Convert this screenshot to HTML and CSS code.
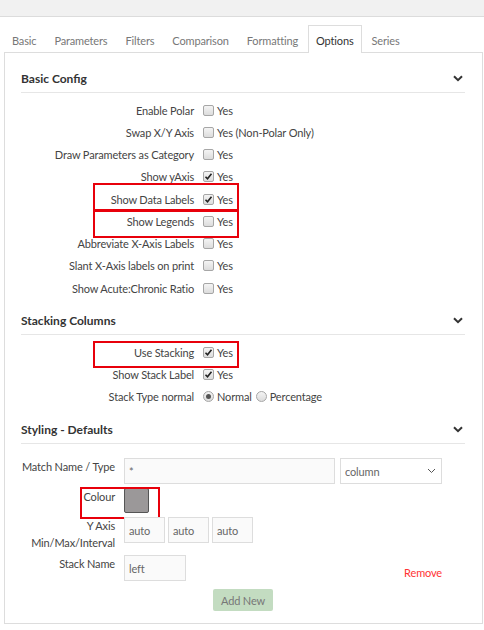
FILE: index.html
```html
<!DOCTYPE html>
<html>
<head>
<meta charset="utf-8">
<link rel="stylesheet" href="styles.css">
</head>
<body>
<div class="topbar"></div>
<ul class="tabs">
  <li class="tab">Basic</li>
  <li class="tab">Parameters</li>
  <li class="tab">Filters</li>
  <li class="tab">Comparison</li>
  <li class="tab">Formatting</li>
  <li class="tab active">Options</li>
  <li class="tab">Series</li>
</ul>
<div class="panel">
  <section class="group">
    <div class="group-head"><h3>Basic Config</h3><svg class="chev" width="10" height="7" viewBox="0 0 10 7"><path d="M1 1.2 L5 5.2 L9 1.2" fill="none" stroke="#333" stroke-width="2"/></svg></div>
    <div class="rows">
      <div class="row"><span class="lbl">Enable Polar</span><span class="ctl"><span class="cb"></span>Yes</span></div>
      <div class="row"><span class="lbl">Swap X/Y Axis</span><span class="ctl"><span class="cb"></span>Yes (Non-Polar Only)</span></div>
      <div class="row"><span class="lbl">Draw Parameters as Category</span><span class="ctl"><span class="cb"></span>Yes</span></div>
      <div class="row"><span class="lbl">Show yAxis</span><span class="ctl"><span class="cb"><svg width="9" height="9" viewBox="0 0 9 9"><path d="M1.5 4.8 L3.5 6.8 L7.5 1.8" fill="none" stroke="#222" stroke-width="1.6"/></svg></span>Yes</span></div>
      <div class="row mark mark-a"><span class="lbl">Show Data Labels</span><span class="ctl"><span class="cb"><svg width="9" height="9" viewBox="0 0 9 9"><path d="M1.5 4.8 L3.5 6.8 L7.5 1.8" fill="none" stroke="#222" stroke-width="1.6"/></svg></span>Yes</span></div>
      <div class="row mark mark-b"><span class="lbl">Show Legends</span><span class="ctl"><span class="cb"></span>Yes</span></div>
      <div class="row"><span class="lbl">Abbreviate X-Axis Labels</span><span class="ctl"><span class="cb"></span>Yes</span></div>
      <div class="row"><span class="lbl">Slant X-Axis labels on print</span><span class="ctl"><span class="cb"></span>Yes</span></div>
      <div class="row"><span class="lbl">Show Acute:Chronic Ratio</span><span class="ctl"><span class="cb"></span>Yes</span></div>
    </div>
  </section>
  <section class="group">
    <div class="group-head"><h3>Stacking Columns</h3><svg class="chev" width="10" height="7" viewBox="0 0 10 7"><path d="M1 1.2 L5 5.2 L9 1.2" fill="none" stroke="#333" stroke-width="2"/></svg></div>
    <div class="rows">
      <div class="row mark mark-c"><span class="lbl">Use Stacking</span><span class="ctl"><span class="cb"><svg width="9" height="9" viewBox="0 0 9 9"><path d="M1.5 4.8 L3.5 6.8 L7.5 1.8" fill="none" stroke="#222" stroke-width="1.6"/></svg></span>Yes</span></div>
      <div class="row"><span class="lbl">Show Stack Label</span><span class="ctl"><span class="cb"><svg width="9" height="9" viewBox="0 0 9 9"><path d="M1.5 4.8 L3.5 6.8 L7.5 1.8" fill="none" stroke="#222" stroke-width="1.6"/></svg></span>Yes</span></div>
      <div class="row"><span class="lbl">Stack Type normal</span><span class="ctl"><span class="radio on"></span>Normal<span class="radio"></span>Percentage</span></div>
    </div>
  </section>
  <section class="group">
    <div class="group-head"><h3>Styling - Defaults</h3><svg class="chev" width="10" height="7" viewBox="0 0 10 7"><path d="M1 1.2 L5 5.2 L9 1.2" fill="none" stroke="#333" stroke-width="2"/></svg></div>
    <div class="form">
      <div class="frow"><span class="flbl">Match Name / Type</span>
        <div class="fctl"><span class="input wide">*</span><span class="input select">column<svg width="9" height="6" viewBox="0 0 9 6"><path d="M1 1 L4.5 4.5 L8 1" fill="none" stroke="#555" stroke-width="1"/></svg></span></div>
      </div>
      <div class="frow colour-row"><span class="flbl">Colour</span>
        <div class="fctl"><span class="swatch"></span></div>
      </div>
      <div class="frow"><span class="flbl">Y Axis<br>Min/Max/Interval</span>
        <div class="fctl tight"><span class="input small">auto</span><span class="input small">auto</span><span class="input small">auto</span></div>
      </div>
      <div class="frow"><span class="flbl">Stack Name</span>
        <div class="fctl spread"><span class="input name">left</span><span class="remove">Remove</span></div>
      </div>
    </div>
    <div class="actions"><span class="btn">Add New</span></div>
  </section>
</div>
</body>
</html>
```

FILE: styles.css
```css
* { box-sizing: border-box; }
html, body { margin: 0; padding: 0; }
body {
  font-family: Lato, "Open Sans", sans-serif;
  font-size: 11px;
  letter-spacing: -0.15px;
  color: #444;
  background: #fff;
  width: 484px;
}
.topbar {
  height: 17px;
  background: #f1f1f1;
  border-bottom: 1px solid #dcdcdc;
}
.tabs {
  display: flex;
  list-style: none;
  margin: 8px 1px 0 4px;
  padding: 0;
  border-bottom: 1px solid #ddd;
}
.tab {
  padding: 6px 7px 3px;
  line-height: 17px;
  margin-right: 2px;
  margin-bottom: -1px;
  color: #777;
  border: 1px solid transparent;
  border-bottom: none;
  height: 28px;
}
.tab.active {
  color: #333;
  background: #fff;
  border-color: #ddd;
}
.panel {
  margin: 0 1px 0 4px;
  border: 1px solid #ddd;
  border-top: none;
  padding: 11px 17px 12px 16px;
}
.group + .group { margin-top: 7px; }
.group-head {
  height: 29px;
  border-bottom: 1px solid #e6e6e6;
  display: flex;
  align-items: center;
  justify-content: space-between;
  padding-right: 2px;
}
.group-head h3 {
  margin: 0;
  font-size: 12px;
  font-weight: bold;
  letter-spacing: 0;
  color: #333;
}
.rows { margin-top: 6px; }
.row {
  position: relative;
  display: grid;
  grid-template-columns: 173px auto;
  column-gap: 9px;
  align-items: center;
  height: 22.25px;
}
.row.mark::after {
  content: "";
  position: absolute;
  left: 72px;
  width: 142px;
  border: 2px solid #e8000b;
  pointer-events: none;
}
.row.mark-a::after { top: -5px; height: 25px; }
.row.mark-b::after { top: -1px; height: 25px; }
.row.mark-c::after { top: 0; height: 23px; }
.lbl { text-align: right; color: #444; white-space: nowrap; }
.ctl { display: flex; align-items: center; color: #444; }
.cb {
  width: 11px;
  height: 11px;
  border: 1px solid #a6a6a6;
  border-radius: 2px;
  background: linear-gradient(#f4f4f4, #dcdcdc);
  margin-right: 3px;
  display: inline-flex;
  align-items: center;
  justify-content: center;
}
.radio {
  width: 11px;
  height: 11px;
  border: 1px solid #a6a6a6;
  border-radius: 50%;
  background: linear-gradient(#f4f4f4, #dcdcdc);
  margin-right: 3px;
  position: relative;
}
.ctl .radio:not(:first-child) { margin-left: 4px; }
.radio.on::after {
  content: "";
  position: absolute;
  left: 2px;
  top: 2px;
  width: 5px;
  height: 5px;
  border-radius: 50%;
  background: #555;
}
.form {
  margin-top: 14px;
  width: 421px;
}
.frow {
  position: relative;
  display: grid;
  grid-template-columns: 94px 1fr;
  column-gap: 9px;
  align-items: start;
}
.frow + .frow { margin-top: 4px; }
.flbl {
  display: flex;
  flex-direction: column;
  align-items: flex-end;
  text-align: right;
  line-height: 17px;
  color: #444;
  white-space: nowrap;
}
.fctl { display: flex; gap: 5px; align-items: flex-start; }
.fctl.tight { gap: 3px; }
.fctl.spread { justify-content: space-between; }
.input {
  height: 26px;
  border: 1px solid #ddd;
  background: #fafafa;
  color: #666;
  padding: 0 4px;
  display: flex;
  align-items: center;
}
.input.wide { width: 211px; }
.input.select {
  width: 102px;
  background: #fff;
  justify-content: space-between;
  padding-right: 5px;
}
.input.small { width: 41px; }
.input.name { width: 62px; }
.swatch {
  width: 25px;
  height: 25px;
  background: #9b9899;
  border: 1px solid #555;
  border-radius: 2px;
}
.colour-row::after {
  content: "";
  position: absolute;
  left: 59px;
  top: -1px;
  width: 76px;
  height: 28px;
  border: 2px solid #e8000b;
  pointer-events: none;
}
.remove {
  color: #f33;
  margin-top: 11px;
}
.actions {
  display: flex;
  justify-content: center;
  margin-top: 8px;
}
.btn {
  background: #c3dcc1;
  color: #777;
  width: 60px;
  height: 22px;
  display: flex;
  align-items: center;
  justify-content: center;
  border-radius: 2px;
}
```
